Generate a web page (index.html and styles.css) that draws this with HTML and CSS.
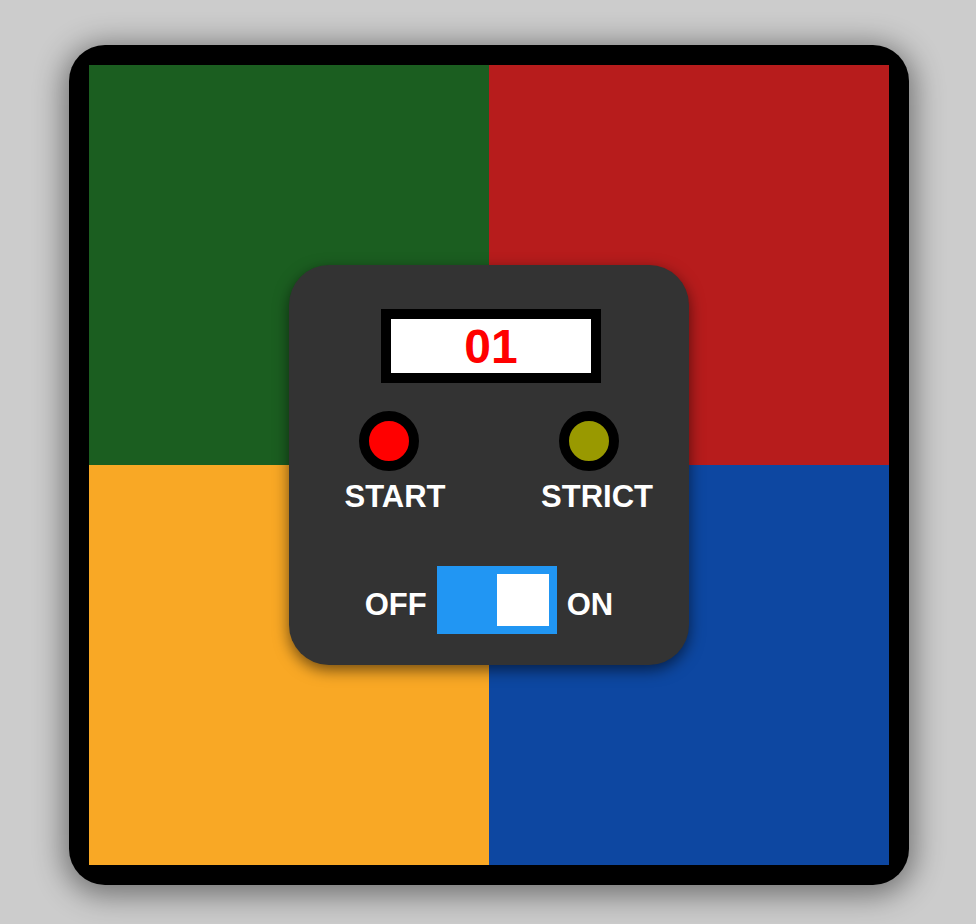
FILE: index.html
```html
<!DOCTYPE html>
<html lang="en">
<head>
<meta charset="utf-8">
<title>Simon</title>
<link rel="stylesheet" href="styles.css">
</head>
<body>
<div class="simon">
  <div class="board">
    <div class="pad green"></div>
    <div class="pad red"></div>
    <div class="pad yellow"></div>
    <div class="pad blue"></div>
    <div class="panel">
      <div class="display"><span class="count">01</span></div>
      <div class="buttons">
        <div class="btn-col">
          <div class="led led-start"></div>
          <div class="label label-start">START</div>
        </div>
        <div class="btn-col">
          <div class="led led-strict"></div>
          <div class="label label-strict">STRICT</div>
        </div>
      </div>
      <div class="power">
        <span class="power-label">OFF</span>
        <div class="switch"><div class="knob"></div></div>
        <span class="power-label">ON</span>
      </div>
    </div>
  </div>
</div>
</body>
</html>
```
FILE: styles.css
```css
html {
  background: #cccccc;
}

body {
  margin: 0;
  padding: 45px 0 39px;
  min-height: 924px;
  box-sizing: border-box;
  background: #cccccc;
  font-family: "Liberation Sans", Arial, sans-serif;
}

.simon {
  width: 800px;
  height: 800px;
  margin: 0 auto;
  padding: 20px;
  background: #000;
  border-radius: 36px;
  box-shadow: 0 5px 30px 5px rgba(0, 0, 0, 0.45);
  position: relative;
  left: 1px;
}

.board {
  position: relative;
  display: grid;
  grid-template-columns: 400px 400px;
  grid-template-rows: 400px 400px;
}

.green { background: #1b5e20; }
.red { background: #b71c1c; }
.yellow { background: #f9a825; }
.blue { background: #0d47a1; }

.panel {
  position: absolute;
  left: 200px;
  top: 200px;
  width: 400px;
  height: 400px;
  background: #333333;
  border-radius: 40px;
  box-shadow: 0 5px 15px rgba(0, 0, 0, 0.55);
  display: flex;
  flex-direction: column;
  align-items: center;
  box-sizing: border-box;
  padding-top: 44px;
}

.display {
  width: 200px;
  height: 54px;
  border: 10px solid #000;
  background: #fff;
  display: flex;
  align-items: center;
  justify-content: center;
  margin-left: 4px;
}

.count {
  color: #ff0000;
  font-weight: bold;
  font-size: 48px;
  line-height: 1;
  margin-top: 2px;
}

.buttons {
  display: grid;
  grid-template-columns: 200px 200px;
  margin-top: 28px;
}

.btn-col {
  display: flex;
  flex-direction: column;
  align-items: center;
}

.led {
  width: 40px;
  height: 40px;
  border: 10px solid #000;
  border-radius: 50%;
}

.led-start { background: #ff0000; }
.led-strict { background: #999900; }

.label {
  color: #fff;
  font-weight: bold;
  font-size: 31px;
  margin-top: 8px;
}

.label-start { padding-left: 12px; }
.label-strict { padding-left: 16px; }

.power {
  display: flex;
  align-items: center;
  margin-top: 51px;
  gap: 10px;
}

.power-label {
  color: #fff;
  font-weight: bold;
  font-size: 31px;
  margin-top: 9px;
}

.switch {
  width: 120px;
  height: 68px;
  box-sizing: border-box;
  padding: 8px;
  background: #2196f3;
  display: flex;
  justify-content: flex-end;
}

.knob {
  width: 52px;
  height: 52px;
  background: #fff;
}
```
